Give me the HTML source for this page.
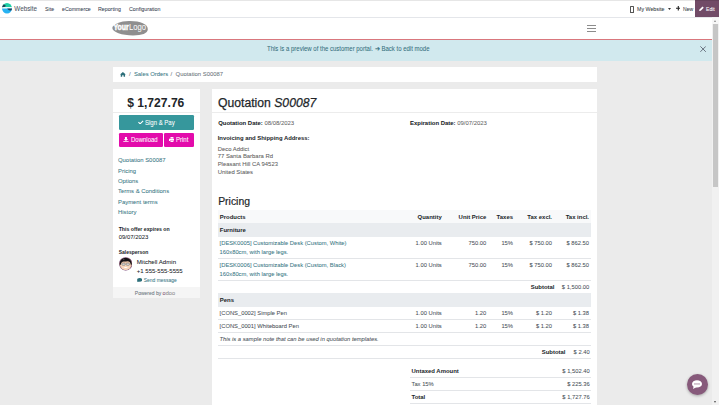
<!DOCTYPE html>
<html><head><meta charset="utf-8"><style>
html,body{margin:0;padding:0;width:719px;height:405px;overflow:hidden;background:#ebebeb}
body{position:relative;font-family:"Liberation Sans", sans-serif;}
b{font-weight:700}
div[style*="font-weight:400"]{-webkit-text-stroke:0.05px currentColor}
</style></head><body>
<div style="position:absolute;left:0px;top:0px;width:719px;height:405px;background:#ebebeb;"></div>
<div style="position:absolute;left:0px;top:0px;width:719px;height:1px;background:#e6e6e6;"></div>
<div style="position:absolute;left:0px;top:1px;width:719px;height:16px;background:#ffffff;"></div>
<div style="position:absolute;left:0px;top:17px;width:712px;height:1px;background:#e4e6ea;"></div>
<div style="position:absolute;left:695.2px;top:0px;width:23.799999999999955px;height:17.2px;background:#714b67;"></div>
<div style="position:absolute;left:695.2px;top:0px;width:23.799999999999955px;height:1px;background:#65435c;"></div>
<div style="position:absolute;left:0px;top:18px;width:712px;height:21px;background:#ffffff;"></div>
<div style="position:absolute;left:0px;top:38.6px;width:712px;height:1.3999999999999986px;background:#d9777d;"></div>
<div style="position:absolute;left:0px;top:40px;width:712px;height:21px;background:#d1e9ee;"></div>
<div style="position:absolute;left:712px;top:17px;width:7px;height:388px;background:#f1f1f1;"></div>
<div style="position:absolute;left:712px;top:17.5px;width:7px;height:6.5px;background:#f7f7f7;"></div>
<div style="position:absolute;left:713px;top:24px;width:5px;height:163px;background:#c6c6c6;"></div>
<div style="position:absolute;left:714.2px;top:20px;width:0;height:0;border-left:1.8px solid transparent;border-right:1.8px solid transparent;border-bottom:2px solid #8a8a8a"></div>
<div style="position:absolute;left:714.2px;top:400.6px;width:0;height:0;border-left:1.8px solid transparent;border-right:1.8px solid transparent;border-top:2px solid #505050"></div>
<svg style="position:absolute;left:1.8px;top:3.4px" width="10" height="10.6" viewBox="0 0 20 21.2">
<defs><clipPath id="cc"><ellipse cx="10" cy="10.6" rx="10" ry="10.6"/></clipPath></defs>
<g clip-path="url(#cc)">
<rect x="0" y="0" width="20" height="9" fill="#1ccfa6"/>
<rect x="0" y="10.4" width="20" height="12" fill="#27b2f2"/>
<rect x="0" y="8.4" width="20" height="2.4" fill="#ffffff"/>
<path d="M0 3 C3 2.6 6 3.4 7.5 5.2 C7.5 7 6 8.4 0 8.4 Z" fill="#203f56"/>
<path d="M20 10.8 L10.5 10.8 C11 13 14 14.8 20 15 Z" fill="#203f56"/>
</g></svg>
<div style="position:absolute;left:14.3px;top:6.47px;font-size:6.3px;line-height:6.3px;font-weight:400;font-style:normal;color:#4b5563;white-space:nowrap;">Website</div>
<div style="position:absolute;left:44.8px;top:5.72px;font-size:6.0px;line-height:6.0px;font-weight:400;font-style:normal;color:#374151;white-space:nowrap;transform:scaleX(0.88);transform-origin:0 0;">Site</div>
<div style="position:absolute;left:61.6px;top:5.72px;font-size:6.0px;line-height:6.0px;font-weight:400;font-style:normal;color:#374151;white-space:nowrap;transform:scaleX(0.88);transform-origin:0 0;">eCommerce</div>
<div style="position:absolute;left:97.8px;top:5.72px;font-size:6.0px;line-height:6.0px;font-weight:400;font-style:normal;color:#374151;white-space:nowrap;transform:scaleX(0.88);transform-origin:0 0;">Reporting</div>
<div style="position:absolute;left:128.6px;top:5.72px;font-size:6.0px;line-height:6.0px;font-weight:400;font-style:normal;color:#374151;white-space:nowrap;transform:scaleX(0.88);transform-origin:0 0;">Configuration</div>
<div style="position:absolute;left:629.5px;top:6.2px;width:2.9px;height:4.7px;border:0.5px solid #555;border-radius:0.6px"></div>
<div style="position:absolute;left:637px;top:5.72px;font-size:6.0px;line-height:6.0px;font-weight:400;font-style:normal;color:#333a44;white-space:nowrap;transform:scaleX(0.88);transform-origin:0 0;">My Website</div>
<svg style="position:absolute;left:667.8px;top:7.6px" width="3" height="2" viewBox="0 0 6 4"><path d="M0 0H6L3 4Z" fill="#333"/></svg>
<svg style="position:absolute;left:675.5px;top:6.2px" width="4.6" height="4.6" viewBox="0 0 10 10"><path d="M5 0V10M0 5H10" stroke="#222" stroke-width="2.4"/></svg>
<div style="position:absolute;left:683px;top:5.72px;font-size:6.0px;line-height:6.0px;font-weight:400;font-style:normal;color:#333a44;white-space:nowrap;transform:scaleX(0.85);transform-origin:0 0;">New</div>
<svg style="position:absolute;left:698.6px;top:6.0px" width="5.2" height="5.2" viewBox="0 0 10 10"><path d="M0.3 9.7 L1 6.6 L6.8 0.8 L9.2 3.2 L3.4 9Z" fill="#fff"/></svg>
<div style="position:absolute;left:705.9px;top:5.72px;font-size:6.0px;line-height:6.0px;font-weight:400;font-style:normal;color:#ffffff;white-space:nowrap;transform:scaleX(0.85);transform-origin:0 0;">Edit</div>
<svg style="position:absolute;left:112px;top:20px" width="37" height="17" viewBox="0 0 37 17">
<path d="M0.3 7.7 C2 4 8 1.2 17 1 C28 0.8 36 4 35.8 9.2 C35.6 13.5 30 15.4 21 15.4 C10 15.4 0 12 0.3 7.7Z" fill="#8f8f8f"/>
<text x="1.4" y="10.2" font-family="Liberation Sans" font-weight="700" font-size="8.4" fill="#fff" stroke="#fff" stroke-width="0.45" textLength="15.2" lengthAdjust="spacingAndGlyphs">Your</text>
<text x="17" y="10.2" font-family="Liberation Sans" font-size="8.4" fill="#fff" textLength="17" lengthAdjust="spacingAndGlyphs">Logo</text>
</svg>
<div style="position:absolute;left:587px;top:24.7px;width:9px;height:1.0px;background:#8c8c8c;"></div>
<div style="position:absolute;left:587px;top:27.7px;width:9px;height:1.0px;background:#8c8c8c;"></div>
<div style="position:absolute;left:587px;top:30.7px;width:9px;height:1.0px;background:#8c8c8c;"></div>
<div style="position:absolute;left:267px;top:46.16px;font-size:6.9px;line-height:6.9px;font-weight:400;font-style:normal;color:#346f7c;white-space:nowrap;transform:scaleX(0.87);transform-origin:0 0;">This is a preview of the customer portal. &#10132; Back to edit mode</div>
<svg style="position:absolute;left:699.9px;top:46.4px" width="6.2" height="6.2" viewBox="0 0 10 10"><path d="M0.6 0.6L9.4 9.4M9.4 0.6L0.6 9.4" stroke="#4a5060" stroke-width="1.25"/></svg>
<div style="position:absolute;left:113px;top:67px;width:484px;height:15px;background:#ffffff;"></div>
<svg style="position:absolute;left:120.3px;top:72px" width="5.8" height="4.8" viewBox="0 0 12 10"><path d="M6 0L0 5H1.5V10H4.5V7H7.5V10H10.5V5H12Z" fill="#2d6f7a"/></svg>
<div style="position:absolute;left:129px;top:72.40px;font-size:5.9px;line-height:5.9px;font-weight:400;font-style:normal;color:#6c757d;white-space:nowrap;">/</div>
<div style="position:absolute;left:133.9px;top:72.40px;font-size:5.9px;line-height:5.9px;font-weight:400;font-style:normal;color:#3a7885;white-space:nowrap;">Sales Orders</div>
<div style="position:absolute;left:170.4px;top:72.40px;font-size:5.9px;line-height:5.9px;font-weight:400;font-style:normal;color:#6c757d;white-space:nowrap;">/</div>
<div style="position:absolute;left:175.6px;top:72.40px;font-size:5.9px;line-height:5.9px;font-weight:400;font-style:normal;color:#6c757d;white-space:nowrap;">Quotation S00087</div>
<div style="position:absolute;left:113px;top:89px;width:86.5px;height:209px;background:#ffffff;"></div>
<div style="position:absolute;left:113px;top:112px;width:86.5px;height:1px;background:#ececec;"></div>
<div style="position:absolute;left:113px;top:287px;width:86.5px;height:11px;background:#f5f5f5;"></div>
<div style="position:absolute;left:127.2px;top:97.35px;font-size:12.1px;line-height:12.1px;font-weight:700;font-style:normal;color:#212529;white-space:nowrap;">$ 1,727.76</div>
<div style="position:absolute;left:118.9px;top:115.1px;width:74.79999999999998px;height:14.599999999999994px;background:#36979c;border-radius:1.3px"></div>
<svg style="position:absolute;left:138.2px;top:120.0px" width="5.6" height="4.4" viewBox="0 0 12 9"><path d="M1 4.5L4.5 8L11 1.5" stroke="#fff" stroke-width="2.4" fill="none"/></svg>
<div style="position:absolute;left:145.4px;top:119.58px;font-size:6.4px;line-height:6.4px;font-weight:400;font-style:normal;color:#ffffff;white-space:nowrap;transform:scaleX(0.94);transform-origin:0 0;">Sign &amp; Pay</div>
<div style="position:absolute;left:118.9px;top:132.8px;width:43.79999999999998px;height:14.299999999999983px;background:#e30bab;border-radius:1.3px"></div>
<svg style="position:absolute;left:123.2px;top:137.4px" width="5.9" height="5" viewBox="0 0 12 10"><path d="M4 0H8V4H10.5L6 8L1.5 4H4Z" fill="#fff"/><rect x="0.5" y="8.5" width="11" height="1.5" fill="#fff"/></svg>
<div style="position:absolute;left:130.9px;top:136.98px;font-size:6.4px;line-height:6.4px;font-weight:400;font-style:normal;color:#ffffff;white-space:nowrap;transform:scaleX(0.94);transform-origin:0 0;">Download</div>
<div style="position:absolute;left:164.3px;top:132.8px;width:29.399999999999977px;height:14.299999999999983px;background:#e30bab;border-radius:1.3px"></div>
<svg style="position:absolute;left:168.6px;top:137.4px" width="5.9" height="5" viewBox="0 0 12 10"><rect x="3" y="0" width="6" height="3" fill="#fff"/><path d="M0 3.5H12V8H9.5V6.5H2.5V8H0Z" fill="#fff"/><rect x="3" y="7" width="6" height="3" fill="#fff"/></svg>
<div style="position:absolute;left:175.8px;top:136.98px;font-size:6.4px;line-height:6.4px;font-weight:400;font-style:normal;color:#ffffff;white-space:nowrap;transform:scaleX(0.94);transform-origin:0 0;">Print</div>
<div style="position:absolute;left:118px;top:158.10px;font-size:5.9px;line-height:5.9px;font-weight:400;font-style:normal;color:#3a7885;white-space:nowrap;">Quotation S00087</div>
<div style="position:absolute;left:118px;top:168.50px;font-size:5.9px;line-height:5.9px;font-weight:400;font-style:normal;color:#3a7885;white-space:nowrap;">Pricing</div>
<div style="position:absolute;left:118px;top:179.00px;font-size:5.9px;line-height:5.9px;font-weight:400;font-style:normal;color:#3a7885;white-space:nowrap;">Options</div>
<div style="position:absolute;left:118px;top:189.40px;font-size:5.9px;line-height:5.9px;font-weight:400;font-style:normal;color:#3a7885;white-space:nowrap;">Terms &amp; Conditions</div>
<div style="position:absolute;left:118px;top:199.80px;font-size:5.9px;line-height:5.9px;font-weight:400;font-style:normal;color:#3a7885;white-space:nowrap;">Payment terms</div>
<div style="position:absolute;left:118px;top:210.20px;font-size:5.9px;line-height:5.9px;font-weight:400;font-style:normal;color:#3a7885;white-space:nowrap;">History</div>
<div style="position:absolute;left:118.7px;top:226.60px;font-size:5.2px;line-height:5.2px;font-weight:700;font-style:normal;color:#212529;white-space:nowrap;">This offer expires on</div>
<div style="position:absolute;left:118.7px;top:235.06px;font-size:5.95px;line-height:5.95px;font-weight:400;font-style:normal;color:#212529;white-space:nowrap;">09/07/2023</div>
<div style="position:absolute;left:118.7px;top:249.67px;font-size:5.0px;line-height:5.0px;font-weight:700;font-style:normal;color:#212529;white-space:nowrap;">Salesperson</div>
<svg style="position:absolute;left:118.9px;top:257.2px" width="13.4" height="13.6" viewBox="0 0 20 20">
<defs><clipPath id="av"><circle cx="10" cy="10" r="9.2"/></clipPath></defs>
<circle cx="10" cy="10" r="9.9" fill="#6d3a6e"/>
<g clip-path="url(#av)">
<rect width="20" height="20" fill="#e9c2a6"/>
<path d="M3 9 C3 16 6 20 10 20 C14 20 17 16 17 9Z" fill="#f8d7bd"/>
<path d="M0.5 12 C0 3 5 0.5 10 0.5 C15 0.5 20 3 19.5 12 L17.5 11 C17 7.5 15.5 6.5 13 6.2 C11 6 9.5 6.8 7.5 6.5 C5 6.3 3.2 7.5 2.8 11Z" fill="#141116"/>
<path d="M5.5 4 C6.5 3 8 3 8.5 4 C7.5 4.5 6.5 4.8 5.5 4Z" fill="#5a5560"/>
<rect x="4.4" y="9" width="4.8" height="3.2" rx="1" fill="#dcdcdc" stroke="#666" stroke-width="0.8"/>
<rect x="10.8" y="9" width="4.8" height="3.2" rx="1" fill="#dcdcdc" stroke="#666" stroke-width="0.8"/>
<path d="M6.8 14.8 Q10 17.6 13.2 14.8 Z" fill="#fff"/>
</g></svg>
<div style="position:absolute;left:136.8px;top:259.04px;font-size:6.1px;line-height:6.1px;font-weight:400;font-style:normal;color:#212529;white-space:nowrap;">Mitchell Admin</div>
<div style="position:absolute;left:136.8px;top:267.92px;font-size:6.0px;line-height:6.0px;font-weight:400;font-style:normal;color:#212529;white-space:nowrap;">+1 555-555-5555</div>
<svg style="position:absolute;left:137.1px;top:277.8px" width="5.2" height="4.4" viewBox="0 0 12 10"><ellipse cx="6" cy="4.3" rx="6" ry="4.3" fill="#2d6f7a"/><path d="M1.5 6.5L0.5 10L4.5 7.5Z" fill="#2d6f7a"/></svg>
<div style="position:absolute;left:143.8px;top:278.51px;font-size:4.95px;line-height:4.95px;font-weight:400;font-style:normal;color:#3a7885;white-space:nowrap;">Send message</div>
<div style="position:absolute;left:134.8px;top:291.07px;font-size:5.0px;line-height:5.0px;font-weight:400;font-style:normal;color:#6c757d;white-space:nowrap;">Powered by <span style="color:#875a7b;font-size:5.6px">o</span><span style="color:#8f8f8f;font-size:5.6px">doo</span></div>
<div style="position:absolute;left:212px;top:89px;width:385px;height:316px;background:#ffffff;"></div>
<div style="position:absolute;left:212px;top:112px;width:385px;height:1px;background:#ececec;"></div>
<div style="position:absolute;left:218.3px;top:97.42px;font-size:12.5px;line-height:12.5px;font-weight:400;font-style:normal;color:#212529;white-space:nowrap;transform:scaleX(0.975);transform-origin:0 0;-webkit-text-stroke:0.25px #212529;">Quotation <i>S00087</i></div>
<div style="position:absolute;left:218.2px;top:121.16px;font-size:5.95px;line-height:5.95px;font-weight:400;font-style:normal;color:#212529;white-space:nowrap;"><b>Quotation Date:</b> <span style="color:#666">08/08/2023</span></div>
<div style="position:absolute;left:410px;top:121.16px;font-size:5.95px;line-height:5.95px;font-weight:400;font-style:normal;color:#212529;white-space:nowrap;"><b>Expiration Date:</b> <span style="color:#666">09/07/2023</span></div>
<div style="position:absolute;left:217.7px;top:136.20px;font-size:5.9px;line-height:5.9px;font-weight:700;font-style:normal;color:#212529;white-space:nowrap;">Invoicing and Shipping Address:</div>
<div style="position:absolute;left:217.7px;top:146.60px;font-size:5.9px;line-height:5.9px;font-weight:400;font-style:normal;color:#5c5c5c;white-space:nowrap;">Deco Addict</div>
<div style="position:absolute;left:217.7px;top:154.40px;font-size:5.9px;line-height:5.9px;font-weight:400;font-style:normal;color:#5c5c5c;white-space:nowrap;">77 Santa Barbara Rd</div>
<div style="position:absolute;left:217.7px;top:162.20px;font-size:5.9px;line-height:5.9px;font-weight:400;font-style:normal;color:#5c5c5c;white-space:nowrap;">Pleasant Hill CA 94523</div>
<div style="position:absolute;left:217.7px;top:169.80px;font-size:5.9px;line-height:5.9px;font-weight:400;font-style:normal;color:#5c5c5c;white-space:nowrap;">United States</div>
<div style="position:absolute;left:218.2px;top:197.19px;font-size:10.4px;line-height:10.4px;font-weight:400;font-style:normal;color:#212529;white-space:nowrap;-webkit-text-stroke:0.2px #212529;">Pricing</div>
<div style="position:absolute;left:217.5px;top:210px;width:373.5px;height:12.800000000000011px;background:#f8f9fa;"></div>
<div style="position:absolute;left:217.5px;top:222.8px;width:373.5px;height:14.0px;background:#e9ecef;"></div>
<div style="position:absolute;left:219.8px;top:214.66px;font-size:5.95px;line-height:5.95px;font-weight:700;font-style:normal;color:#212529;white-space:nowrap;">Products</div>
<div style="position:absolute;right:277.3px;top:214.66px;font-size:5.95px;line-height:5.95px;font-weight:700;font-style:normal;color:#212529;white-space:nowrap;">Quantity</div>
<div style="position:absolute;right:232.7px;top:214.66px;font-size:5.95px;line-height:5.95px;font-weight:700;font-style:normal;color:#212529;white-space:nowrap;">Unit Price</div>
<div style="position:absolute;right:206px;top:214.66px;font-size:5.95px;line-height:5.95px;font-weight:700;font-style:normal;color:#212529;white-space:nowrap;">Taxes</div>
<div style="position:absolute;right:167px;top:214.66px;font-size:5.95px;line-height:5.95px;font-weight:700;font-style:normal;color:#212529;white-space:nowrap;">Tax excl.</div>
<div style="position:absolute;right:130px;top:214.66px;font-size:5.95px;line-height:5.95px;font-weight:700;font-style:normal;color:#212529;white-space:nowrap;">Tax incl.</div>
<div style="position:absolute;left:219.8px;top:227.96px;font-size:5.95px;line-height:5.95px;font-weight:700;font-style:normal;color:#212529;white-space:nowrap;">Furniture</div>
<div style="position:absolute;left:219.6px;top:241.29px;font-size:5.8px;line-height:5.8px;font-weight:400;font-style:normal;color:#3a7885;white-space:nowrap;">[DESK0005] Customizable Desk (Custom, White)</div>
<div style="position:absolute;left:219.6px;top:249.89px;font-size:5.8px;line-height:5.8px;font-weight:400;font-style:normal;color:#3a7885;white-space:nowrap;">160x80cm, with large legs.</div>
<div style="position:absolute;right:277.3px;top:241.29px;font-size:5.8px;line-height:5.8px;font-weight:400;font-style:normal;color:#495057;white-space:nowrap;">1.00 Units</div>
<div style="position:absolute;right:232.7px;top:241.29px;font-size:5.8px;line-height:5.8px;font-weight:400;font-style:normal;color:#495057;white-space:nowrap;">750.00</div>
<div style="position:absolute;right:206px;top:241.29px;font-size:5.8px;line-height:5.8px;font-weight:400;font-style:normal;color:#495057;white-space:nowrap;">15%</div>
<div style="position:absolute;right:167px;top:241.29px;font-size:5.8px;line-height:5.8px;font-weight:400;font-style:normal;color:#495057;white-space:nowrap;">$ 750.00</div>
<div style="position:absolute;right:130px;top:241.29px;font-size:5.8px;line-height:5.8px;font-weight:400;font-style:normal;color:#495057;white-space:nowrap;">$ 862.50</div>
<div style="position:absolute;left:217.5px;top:258.3px;width:373.5px;height:0.5999999999999659px;background:#e3e5e8;"></div>
<div style="position:absolute;left:219.6px;top:263.49px;font-size:5.8px;line-height:5.8px;font-weight:400;font-style:normal;color:#3a7885;white-space:nowrap;">[DESK0006] Customizable Desk (Custom, Black)</div>
<div style="position:absolute;left:219.6px;top:272.09px;font-size:5.8px;line-height:5.8px;font-weight:400;font-style:normal;color:#3a7885;white-space:nowrap;">160x80cm, with large legs.</div>
<div style="position:absolute;right:277.3px;top:263.49px;font-size:5.8px;line-height:5.8px;font-weight:400;font-style:normal;color:#495057;white-space:nowrap;">1.00 Units</div>
<div style="position:absolute;right:232.7px;top:263.49px;font-size:5.8px;line-height:5.8px;font-weight:400;font-style:normal;color:#495057;white-space:nowrap;">750.00</div>
<div style="position:absolute;right:206px;top:263.49px;font-size:5.8px;line-height:5.8px;font-weight:400;font-style:normal;color:#495057;white-space:nowrap;">15%</div>
<div style="position:absolute;right:167px;top:263.49px;font-size:5.8px;line-height:5.8px;font-weight:400;font-style:normal;color:#495057;white-space:nowrap;">$ 750.00</div>
<div style="position:absolute;right:130px;top:263.49px;font-size:5.8px;line-height:5.8px;font-weight:400;font-style:normal;color:#495057;white-space:nowrap;">$ 862.50</div>
<div style="position:absolute;left:217.5px;top:280.1px;width:373.5px;height:0.5999999999999659px;background:#e3e5e8;"></div>
<div style="position:absolute;right:164.5px;top:285.36px;font-size:5.95px;line-height:5.95px;font-weight:700;font-style:normal;color:#212529;white-space:nowrap;">Subtotal</div>
<div style="position:absolute;right:129.79999999999995px;top:285.49px;font-size:5.8px;line-height:5.8px;font-weight:400;font-style:normal;color:#495057;white-space:nowrap;">$ 1,500.00</div>
<div style="position:absolute;left:217.5px;top:292.9px;width:373.5px;height:13.900000000000034px;background:#e9ecef;"></div>
<div style="position:absolute;left:219.8px;top:297.86px;font-size:5.95px;line-height:5.95px;font-weight:700;font-style:normal;color:#212529;white-space:nowrap;">Pens</div>
<div style="position:absolute;left:219.6px;top:311.19px;font-size:5.8px;line-height:5.8px;font-weight:400;font-style:normal;color:#495057;white-space:nowrap;">[CONS_0002] Simple Pen</div>
<div style="position:absolute;right:277.3px;top:311.19px;font-size:5.8px;line-height:5.8px;font-weight:400;font-style:normal;color:#495057;white-space:nowrap;">1.00 Units</div>
<div style="position:absolute;right:232.7px;top:311.19px;font-size:5.8px;line-height:5.8px;font-weight:400;font-style:normal;color:#495057;white-space:nowrap;">1.20</div>
<div style="position:absolute;right:206px;top:311.19px;font-size:5.8px;line-height:5.8px;font-weight:400;font-style:normal;color:#495057;white-space:nowrap;">15%</div>
<div style="position:absolute;right:167px;top:311.19px;font-size:5.8px;line-height:5.8px;font-weight:400;font-style:normal;color:#495057;white-space:nowrap;">$ 1.20</div>
<div style="position:absolute;right:130px;top:311.19px;font-size:5.8px;line-height:5.8px;font-weight:400;font-style:normal;color:#495057;white-space:nowrap;">$ 1.38</div>
<div style="position:absolute;left:217.5px;top:319.3px;width:373.5px;height:0.5999999999999659px;background:#e3e5e8;"></div>
<div style="position:absolute;left:219.6px;top:323.79px;font-size:5.8px;line-height:5.8px;font-weight:400;font-style:normal;color:#495057;white-space:nowrap;">[CONS_0001] Whiteboard Pen</div>
<div style="position:absolute;right:277.3px;top:323.79px;font-size:5.8px;line-height:5.8px;font-weight:400;font-style:normal;color:#495057;white-space:nowrap;">1.00 Units</div>
<div style="position:absolute;right:232.7px;top:323.79px;font-size:5.8px;line-height:5.8px;font-weight:400;font-style:normal;color:#495057;white-space:nowrap;">1.20</div>
<div style="position:absolute;right:206px;top:323.79px;font-size:5.8px;line-height:5.8px;font-weight:400;font-style:normal;color:#495057;white-space:nowrap;">15%</div>
<div style="position:absolute;right:167px;top:323.79px;font-size:5.8px;line-height:5.8px;font-weight:400;font-style:normal;color:#495057;white-space:nowrap;">$ 1.20</div>
<div style="position:absolute;right:130px;top:323.79px;font-size:5.8px;line-height:5.8px;font-weight:400;font-style:normal;color:#495057;white-space:nowrap;">$ 1.38</div>
<div style="position:absolute;left:217.5px;top:332px;width:373.5px;height:0.6000000000000227px;background:#e3e5e8;"></div>
<div style="position:absolute;left:219.5px;top:337.09px;font-size:5.8px;line-height:5.8px;font-weight:400;font-style:italic;color:#495057;white-space:nowrap;">This is a sample note that can be used in quotation templates.</div>
<div style="position:absolute;left:217.5px;top:345px;width:373.5px;height:0.6000000000000227px;background:#e3e5e8;"></div>
<div style="position:absolute;right:153.5px;top:349.86px;font-size:5.95px;line-height:5.95px;font-weight:700;font-style:normal;color:#212529;white-space:nowrap;">Subtotal</div>
<div style="position:absolute;right:129.29999999999995px;top:349.99px;font-size:5.8px;line-height:5.8px;font-weight:400;font-style:normal;color:#495057;white-space:nowrap;">$ 2.40</div>
<div style="position:absolute;left:217.5px;top:358.2px;width:373.5px;height:0.6000000000000227px;background:#e3e5e8;"></div>
<div style="position:absolute;left:411.5px;top:368.76px;font-size:5.95px;line-height:5.95px;font-weight:700;font-style:normal;color:#212529;white-space:nowrap;">Untaxed Amount</div>
<div style="position:absolute;right:129.29999999999995px;top:368.89px;font-size:5.8px;line-height:5.8px;font-weight:400;font-style:normal;color:#495057;white-space:nowrap;">$ 1,502.40</div>
<div style="position:absolute;left:409.7px;top:377.2px;width:181.3px;height:0.6000000000000227px;background:#e3e5e8;"></div>
<div style="position:absolute;left:411.5px;top:381.99px;font-size:5.8px;line-height:5.8px;font-weight:400;font-style:normal;color:#495057;white-space:nowrap;">Tax 15%</div>
<div style="position:absolute;right:129.29999999999995px;top:381.99px;font-size:5.8px;line-height:5.8px;font-weight:400;font-style:normal;color:#495057;white-space:nowrap;">$ 225.36</div>
<div style="position:absolute;left:409.7px;top:390.3px;width:181.3px;height:0.5999999999999659px;background:#e3e5e8;"></div>
<div style="position:absolute;left:411.5px;top:394.96px;font-size:5.95px;line-height:5.95px;font-weight:700;font-style:normal;color:#212529;white-space:nowrap;">Total</div>
<div style="position:absolute;right:129.29999999999995px;top:395.09px;font-size:5.8px;line-height:5.8px;font-weight:400;font-style:normal;color:#495057;white-space:nowrap;">$ 1,727.76</div>
<div style="position:absolute;left:409.7px;top:403.1px;width:181.3px;height:0.5999999999999659px;background:#e3e5e8;"></div>
<div style="position:absolute;left:686.8px;top:373.6px;width:21px;height:21px;border-radius:50%;background:#875a7b;box-shadow:0 1px 3px rgba(0,0,0,0.3)"></div>
<svg style="position:absolute;left:692.2px;top:379.6px" width="10" height="9.2" viewBox="0 0 18 16.5"><ellipse cx="9" cy="7" rx="9" ry="6.6" fill="#fff"/><path d="M3.2 10.5L1.8 16L8.5 12.5Z" fill="#fff"/><circle cx="5.4" cy="7" r="1.2" fill="#875a7b"/><circle cx="9" cy="7" r="1.2" fill="#875a7b"/><circle cx="12.6" cy="7" r="1.2" fill="#875a7b"/></svg>
</body></html>
